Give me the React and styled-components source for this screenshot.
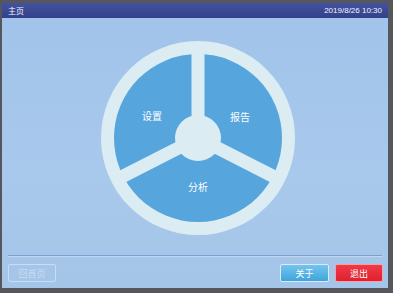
import React from "react";
import styled, { createGlobalStyle } from "styled-components";

const Global = createGlobalStyle`
  html, body {
    margin: 0;
    padding: 0;
    background: #4a4c52;
  }
  body {
    font-family: "Noto Sans CJK SC", "Noto Sans", sans-serif;
  }
`;

const Bezel = styled.div`
  width: 393px;
  height: 293px;
  box-sizing: border-box;
  padding: 3px 5px 5px 2px;
  background: #55575c;
  display: flex;
`;

const Screen = styled.div`
  flex: 1;
  display: flex;
  flex-direction: column;
  background: linear-gradient(180deg, #a2c3ea 0%, #a8c9ec 60%, #a5c5e8 100%);
  overflow: hidden;
`;

const TitleBar = styled.div`
  height: 15px;
  display: flex;
  align-items: center;
  justify-content: space-between;
  padding: 0 6px 0 6px;
  background: linear-gradient(180deg, #43529e 0%, #33418a 100%);
  color: #f2f4ff;
  font-size: 8px;
  font-family: "Liberation Sans", "Noto Sans CJK SC", sans-serif;
`;

const Main = styled.div`
  flex: 1;
  display: flex;
  align-items: center;
  justify-content: center;
`;

const Wheel = styled.svg`
  width: 194px;
  height: 194px;
  margin-left: 6px;
  margin-top: 2px;
`;

const Divider = styled.div`
  height: 1px;
  margin: 0 6px;
  background: #7d9fd0;
  border-bottom: 1px solid #c0d8f2;
`;

const Footer = styled.div`
  height: 30px;
  display: flex;
  align-items: center;
  padding: 1px 5px 0 6px;
  gap: 6px;
`;

const Button = styled.div`
  width: ${(p) => p.w}px;
  height: 18px;
  box-sizing: border-box;
  display: flex;
  align-items: center;
  justify-content: center;
  border-radius: 2px;
  font-size: 9px;
  color: #fff;
  background: ${(p) => p.bg};
  border: 1px solid ${(p) => p.bd};
  margin-left: ${(p) => (p.push ? "auto" : "0")};
`;

const GhostText = styled.span`
  color: #c8ddf3;
`;

const toXY = (deg, r) => {
  const a = (deg * Math.PI) / 180;
  return [r * Math.cos(a), r * Math.sin(a)];
};

export default function App() {
  const spokes = [-90, 27, 153];
  return (
    <>
      <Global />
      <Bezel>
        <Screen>
          <TitleBar>
            <span>主页</span>
            <span>2019/8/26 10:30</span>
          </TitleBar>
          <Main>
            <Wheel viewBox="-97 -97 194 194">
              <circle cx="0" cy="0" r="97" fill="#dbedf3" />
              <circle cx="0" cy="0" r="84" fill="#56a5dc" />
              {spokes.map((d) => {
                const [x, y] = toXY(d, 90);
                return (
                  <line
                    key={d}
                    x1="0"
                    y1="0"
                    x2={x}
                    y2={y}
                    stroke="#dbedf3"
                    strokeWidth="13"
                  />
                );
              })}
              <circle cx="0" cy="0" r="23" fill="#dbedf3" />
              <g
                fill="#ffffff"
                fontSize="10"
                fontFamily="Noto Sans CJK SC, sans-serif"
                textAnchor="middle"
              >
                <text x="-46" y="-18">设置</text>
                <text x="42" y="-17">报告</text>
                <text x="0" y="53">分析</text>
              </g>
            </Wheel>
          </Main>
          <Divider />
          <Footer>
            <Button w={48} bg="transparent" bd="#c9ddf3">
              <GhostText>回首页</GhostText>
            </Button>
            <Button
              w={49}
              push
              bg="linear-gradient(180deg, #74c4ee 0%, #3fa4dc 100%)"
              bd="#d8ecf8"
            >
              关于
            </Button>
            <Button
              w={48}
              bg="linear-gradient(180deg, #f03a48 0%, #e0202e 100%)"
              bd="#f4a0a8"
            >
              退出
            </Button>
          </Footer>
        </Screen>
      </Bezel>
    </>
  );
}
